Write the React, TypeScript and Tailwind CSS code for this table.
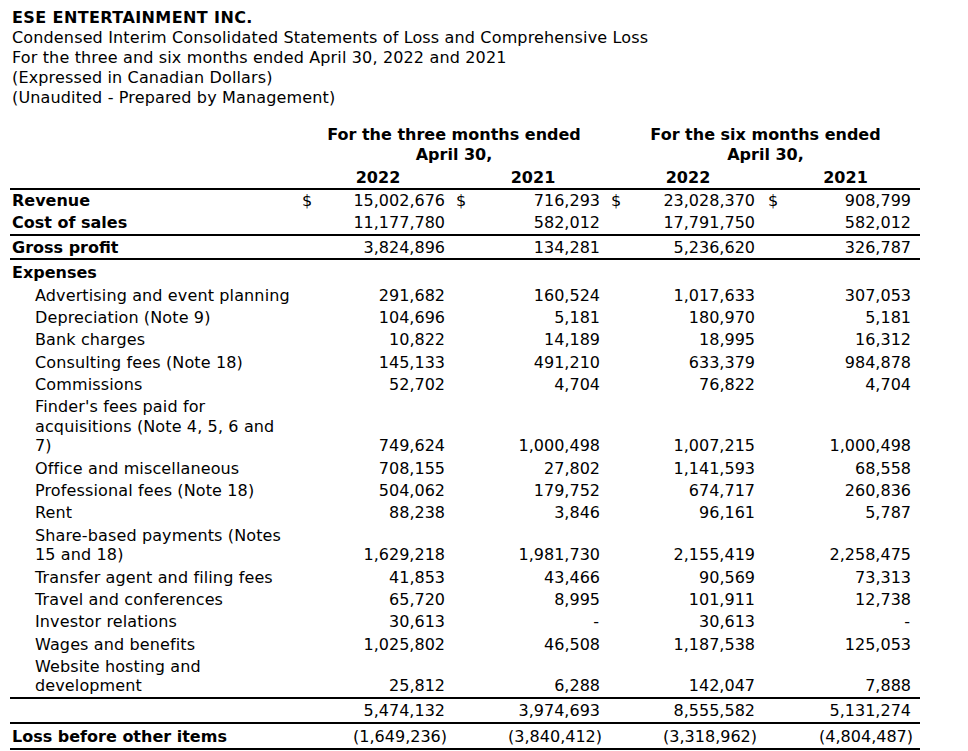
import React from "react";

type Row = {
  label: string[];
  vals?: string[];
  bold?: boolean;
  indent?: boolean;
  dollar?: boolean;
  border?: boolean;
  top?: string;
};

const rows: Row[] = [
  { label: ["Revenue"], bold: true, dollar: true, vals: ["15,002,676", "716,293", "23,028,370", "908,799"] },
  { label: ["Cost of sales"], bold: true, border: true, vals: ["11,177,780", "582,012", "17,791,750", "582,012"] },
  { label: ["Gross profit"], bold: true, border: true, vals: ["3,824,896", "134,281", "5,236,620", "326,787"] },
  { label: ["Expenses"], bold: true, top: "pt-[3px]" },
  { label: ["Advertising and event planning"], indent: true, vals: ["291,682", "160,524", "1,017,633", "307,053"] },
  { label: ["Depreciation (Note 9)"], indent: true, vals: ["104,696", "5,181", "180,970", "5,181"] },
  { label: ["Bank charges"], indent: true, vals: ["10,822", "14,189", "18,995", "16,312"] },
  { label: ["Consulting fees (Note 18)"], indent: true, vals: ["145,133", "491,210", "633,379", "984,878"] },
  { label: ["Commissions"], indent: true, vals: ["52,702", "4,704", "76,822", "4,704"] },
  {
    label: ["Finder's fees paid for", "acquisitions (Note 4, 5, 6 and", "7)"],
    indent: true,
    vals: ["749,624", "1,000,498", "1,007,215", "1,000,498"],
  },
  { label: ["Office and miscellaneous"], indent: true, vals: ["708,155", "27,802", "1,141,593", "68,558"] },
  { label: ["Professional fees (Note 18)"], indent: true, vals: ["504,062", "179,752", "674,717", "260,836"] },
  { label: ["Rent"], indent: true, vals: ["88,238", "3,846", "96,161", "5,787"] },
  {
    label: ["Share-based payments (Notes", "15 and 18)"],
    indent: true,
    vals: ["1,629,218", "1,981,730", "2,155,419", "2,258,475"],
  },
  { label: ["Transfer agent and filing fees"], indent: true, vals: ["41,853", "43,466", "90,569", "73,313"] },
  { label: ["Travel and conferences"], indent: true, vals: ["65,720", "8,995", "101,911", "12,738"] },
  { label: ["Investor relations"], indent: true, vals: ["30,613", "-", "30,613", "-"] },
  { label: ["Wages and benefits"], indent: true, vals: ["1,025,802", "46,508", "1,187,538", "125,053"] },
  {
    label: ["Website hosting and", "development"],
    indent: true,
    border: true,
    vals: ["25,812", "6,288", "142,047", "7,888"],
  },
  { label: [""], border: true, vals: ["5,474,132", "3,974,693", "8,555,582", "5,131,274"] },
  {
    label: ["Loss before other items"],
    bold: true,
    border: true,
    top: "pt-[3px]",
    vals: ["(1,649,236)", "(3,840,412)", "(3,318,962)", "(4,804,487)"],
  },
];

const colPad = ["pl-[7px] pr-[5px]", "pl-[6px] pr-[5px]", "pl-[6px] pr-[5px]", "pl-[8px] pr-[9px]"];

export default function App() {
  return (
    <div className="min-h-[751px] w-[968px] bg-white text-black font-['DejaVu_Sans',Verdana,sans-serif] text-[16px] leading-[20px]">
      <div className="pt-[8px] pl-[12px] tracking-[0.15px]">
        <div className="font-bold tracking-[0.4px]">ESE ENTERTAINMENT INC.</div>
        <div>Condensed Interim Consolidated Statements of Loss and Comprehensive Loss</div>
        <div>For the three and six months ended April 30, 2022 and 2021</div>
        <div>(Expressed in Canadian Dollars)</div>
        <div>(Unaudited - Prepared by Management)</div>
      </div>

      <table className="ml-[10px] mt-[17px] w-[910px] table-fixed border-collapse leading-[19.5px]">
        <colgroup>
          <col className="w-[285px]" />
          <col className="w-[155px]" />
          <col className="w-[155px]" />
          <col className="w-[155px]" />
          <col className="w-[160px]" />
        </colgroup>
        <thead>
          <tr className="font-bold">
            <th />
            <th colSpan={2} className="pl-[8px] text-center font-bold">
              For the three months ended
              <br />
              April 30,
            </th>
            <th colSpan={2} className="pl-[6px] text-center font-bold">
              For the six months ended
              <br />
              April 30,
            </th>
          </tr>
          <tr>
            <th className="border-b-2 border-black" />
            {["2022", "2021", "2022", "2021"].map((y, i) => (
              <th key={i} className="border-b-2 border-black pt-[4px] pl-[11px] pb-0 text-center font-bold">
                {y}
              </th>
            ))}
          </tr>
        </thead>
        <tbody>
          {rows.map((r, ri) => {
            const b = r.border ? "border-b-2 border-black" : "";
            const py = `${r.top ?? "pt-[1.4px]"} pb-[1.45px]`;
            return (
              <tr key={ri}>
                <td
                  className={`${b} ${py} align-bottom ${
                    r.indent ? "pl-[25px] tracking-[0.13px]" : "pl-[2px]"
                  } ${r.bold ? "font-bold" : ""}`}
                >
                  {r.label.map((l, li) => (
                    <div key={li} className="whitespace-nowrap">
                      {l || "\u00a0"}
                    </div>
                  ))}
                </td>
                {[0, 1, 2, 3].map((c) => {
                  const v = r.vals ? r.vals[c] : "";
                  const extra = v === "-" ? "pr-[1px]" : v.startsWith("(") ? "-mr-[2px]" : "";
                  return (
                    <td key={c} className={`${b} ${py} ${colPad[c]} align-bottom`}>
                      <div className="flex justify-between whitespace-nowrap">
                        <span>{r.dollar ? "$" : ""}</span>
                        <span className={extra}>{v}</span>
                      </div>
                    </td>
                  );
                })}
              </tr>
            );
          })}
        </tbody>
      </table>
    </div>
  );
}
